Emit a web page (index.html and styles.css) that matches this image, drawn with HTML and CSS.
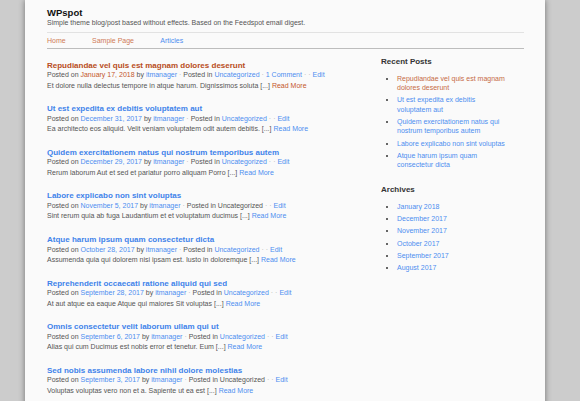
FILE: index.html
```html
<!DOCTYPE html>
<html lang="en">
<head>
<meta charset="utf-8">
<title>WPspot</title>
<link rel="stylesheet" href="styles.css">
</head>
<body>
<div class="page">
  <header class="site-header">
    <h1 class="site-title">WPspot</h1>
    <p class="tagline">Simple theme blog/post based without effects. Based on the Feedspot email digest.</p>
  </header>
  <nav class="site-nav">
    <a class="visited" href="#">Home</a>
    <a class="visited" href="#">Sample Page</a>
    <a href="#">Articles</a>
  </nav>
  <div class="layout">
    <main class="posts">
      <article class="post">
        <h2 class="post-title"><a class="visited" href="#">Repudiandae vel quis est magnam dolores deserunt</a></h2>
        <div class="meta">Posted on <a class="visited" href="#">January 17, 2018</a> by <a href="#">itmanager</a> <span class="sep">·</span> Posted in <a href="#">Uncategorized</a> <span class="sep">·</span> <a href="#">1 Comment</a> <span class="sep">·</span> <span class="sep">·</span> <a href="#">Edit</a></div>
        <p class="excerpt">Et dolore nulla delectus tempore in atque harum. Dignissimos soluta [...] <a class="visited" href="#">Read More</a></p>
      </article>
      <article class="post">
        <h2 class="post-title"><a href="#">Ut est expedita ex debitis voluptatem aut</a></h2>
        <div class="meta">Posted on <a href="#">December 31, 2017</a> by <a href="#">itmanager</a> <span class="sep">·</span> Posted in <a href="#">Uncategorized</a> <span class="sep">·</span> <span class="sep">·</span> <a href="#">Edit</a></div>
        <p class="excerpt">Ea architecto eos aliquid. Velit veniam voluptatem odit autem debitis. [...] <a href="#">Read More</a></p>
      </article>
      <article class="post">
        <h2 class="post-title"><a href="#">Quidem exercitationem natus qui nostrum temporibus autem</a></h2>
        <div class="meta">Posted on <a href="#">December 29, 2017</a> by <a href="#">itmanager</a> <span class="sep">·</span> Posted in <a href="#">Uncategorized</a> <span class="sep">·</span> <span class="sep">·</span> <a href="#">Edit</a></div>
        <p class="excerpt">Rerum laborum Aut et sed et pariatur porro aliquam Porro [...] <a href="#">Read More</a></p>
      </article>
      <article class="post">
        <h2 class="post-title"><a href="#">Labore explicabo non sint voluptas</a></h2>
        <div class="meta">Posted on <a href="#">November 5, 2017</a> by <a href="#">itmanager</a> <span class="sep">·</span> Posted in Uncategorized <span class="sep">·</span> <span class="sep">·</span> <a href="#">Edit</a></div>
        <p class="excerpt">Sint rerum quia ab fuga Laudantium et et voluptatum ducimus [...] <a href="#">Read More</a></p>
      </article>
      <article class="post">
        <h2 class="post-title"><a href="#">Atque harum ipsum quam consectetur dicta</a></h2>
        <div class="meta">Posted on <a href="#">October 28, 2017</a> by <a href="#">itmanager</a> <span class="sep">·</span> Posted in <a href="#">Uncategorized</a> <span class="sep">·</span> <span class="sep">·</span> <a href="#">Edit</a></div>
        <p class="excerpt">Assumenda quia qui dolorem nisi ipsam est. Iusto in doloremque [...] <a href="#">Read More</a></p>
      </article>
      <article class="post">
        <h2 class="post-title"><a href="#">Reprehenderit occaecati ratione aliquid qui sed</a></h2>
        <div class="meta">Posted on <a href="#">September 28, 2017</a> by <a href="#">itmanager</a> <span class="sep">·</span> Posted in <a href="#">Uncategorized</a> <span class="sep">·</span> <span class="sep">·</span> <a href="#">Edit</a></div>
        <p class="excerpt">At aut atque ea eaque Atque qui maiores Sit voluptas [...] <a href="#">Read More</a></p>
      </article>
      <article class="post">
        <h2 class="post-title"><a href="#">Omnis consectetur velit laborum ullam qui ut</a></h2>
        <div class="meta">Posted on <a href="#">September 6, 2017</a> by <a href="#">itmanager</a> <span class="sep">·</span> Posted in <a href="#">Uncategorized</a> <span class="sep">·</span> <span class="sep">·</span> <a href="#">Edit</a></div>
        <p class="excerpt">Alias qui cum Ducimus est nobis error et tenetur. Eum [...] <a href="#">Read More</a></p>
      </article>
      <article class="post">
        <h2 class="post-title"><a href="#">Sed nobis assumenda labore nihil dolore molestias</a></h2>
        <div class="meta">Posted on <a href="#">September 3, 2017</a> by <a href="#">itmanager</a> <span class="sep">·</span> Posted in Uncategorized <span class="sep">·</span> <span class="sep">·</span> <a href="#">Edit</a></div>
        <p class="excerpt">Voluptas voluptas vero non et a. Sapiente ut ea est [...] <a href="#">Read More</a></p>
      </article>
    </main>
    <aside class="sidebar">
      <section class="widget">
        <h3 class="widget-title">Recent Posts</h3>
        <ul class="widget-list">
          <li><a class="visited" href="#">Repudiandae vel quis est magnam dolores deserunt</a></li>
          <li><a href="#">Ut est expedita ex debitis voluptatem aut</a></li>
          <li><a href="#">Quidem exercitationem natus qui nostrum temporibus autem</a></li>
          <li><a href="#">Labore explicabo non sint voluptas</a></li>
          <li><a href="#">Atque harum ipsum quam consectetur dicta</a></li>
        </ul>
      </section>
      <section class="widget">
        <h3 class="widget-title">Archives</h3>
        <ul class="widget-list">
          <li><a href="#">January 2018</a></li>
          <li><a href="#">December 2017</a></li>
          <li><a href="#">November 2017</a></li>
          <li><a href="#">October 2017</a></li>
          <li><a href="#">September 2017</a></li>
          <li><a href="#">August 2017</a></li>
        </ul>
      </section>
    </aside>
  </div>
</div>
</body>
</html>
```
FILE: styles.css
```css
html, body {
  margin: 0;
  padding: 0;
}
body {
  background: #cccccc;
  font-family: "Liberation Sans", Arial, sans-serif;
  color: #555;
  height: 401px;
  overflow: hidden;
}
.page {
  width: 477px;
  margin-left: 25px;
  padding: 0 21px 40px 22px;
  background: #fafafa;
  box-shadow: 0 0 6px rgba(0, 0, 0, 0.45);
  min-height: 500px;
}
a {
  color: #4d8ef0;
  text-decoration: none;
}
a.visited {
  color: #c4572c;
}
.site-header {
  padding: 6.5px 0 4.5px;
  border-bottom: 1px solid #e2e2e2;
}
.site-title {
  margin: 0;
  font-size: 9.5px;
  line-height: 11px;
  font-weight: bold;
  color: #111;
}
.tagline {
  margin: 0;
  font-size: 7px;
  line-height: 10px;
  color: #555;
}
.site-nav {
  display: flex;
  gap: 26.3px;
  padding: 2.5px 0;
  font-size: 7px;
  line-height: 10px;
  border-bottom: 1px solid #bdbdbd;
}
.site-nav a.visited {
  color: #d07a57;
}
.layout {
  display: grid;
  grid-template-columns: 334px 126px;
  align-items: start;
}
.posts {
  padding-top: 11.6px;
}
.post {
  margin-bottom: 13px;
}
.post-title {
  margin: 0;
  font-size: 8px;
  line-height: 9.6px;
  font-weight: bold;
}
.post-title a {
  color: #3f83ea;
}
.post-title a.visited {
  color: #b84d22;
}
.meta, .excerpt {
  margin: 0;
  font-size: 7px;
  line-height: 10.5px;
  color: #555;
}
.sep {
  color: #b5b5b5;
}
.sidebar {
  padding-top: 7.5px;
}
.widget {
  margin-bottom: 15px;
}
.widget-title {
  margin: 0 0 7px;
  font-size: 8px;
  line-height: 10px;
  font-weight: bold;
  color: #333;
}
.widget-list {
  margin: 0;
  padding: 0 0 0 16px;
  font-size: 7px;
  line-height: 9.4px;
  color: #333;
}
.widget-list li {
  margin-bottom: 2.9px;
}
.widget-list a.visited {
  color: #c66a45;
}
```
